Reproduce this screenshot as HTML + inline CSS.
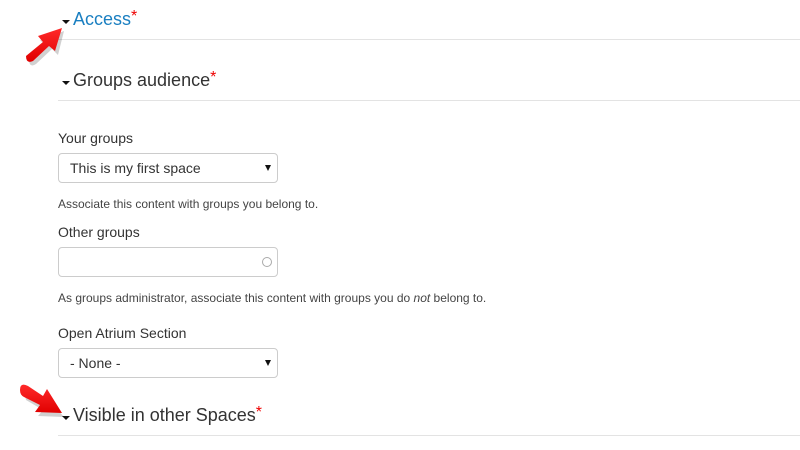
<!DOCTYPE html>
<html><head><meta charset="utf-8"><style>
body{margin:0;width:800px;height:450px;background:#fff;font-family:"Liberation Sans",Arial,sans-serif;color:#333;position:relative;overflow:hidden}
.a{position:absolute;white-space:nowrap}
.h{font-size:18px;line-height:20px}
.h .c{display:inline-block;width:0;height:0;border-left:4px solid transparent;border-right:4px solid transparent;border-top:4px solid #111;margin-right:3px;vertical-align:middle;position:relative;top:2px}
.st{color:#e00;font-size:16px;vertical-align:top;position:relative;top:-2px}
.ln{position:absolute;left:58px;right:0;height:1px;background:#e3e3e3}
.lb{font-size:14px}
.sel{position:absolute;left:58px;width:218px;height:28px;border:1px solid #ccc;border-radius:4px;font-size:14px;line-height:28px;box-sizing:content-box}
.sel span{position:absolute;left:11px}
.sel i{position:absolute;right:6px;top:11px;width:0;height:0;border-left:3px solid transparent;border-right:3px solid transparent;border-top:6px solid #111}
.d{font-size:12px;color:#444}
</style></head><body>
<div class="a h" style="left:62px;top:9px;color:#1a7fc1"><span class="c"></span>Access<span class="st">*</span></div>
<div class="ln" style="top:39px"></div>
<div class="a h" style="left:62px;top:70px"><span class="c"></span>Groups audience<span class="st">*</span></div>
<div class="ln" style="top:100px"></div>
<div class="a lb" style="left:58px;top:130px">Your groups</div>
<div class="sel" style="top:153px"><span>This is my first space</span><i></i></div>
<div class="a d" style="left:58px;top:197px">Associate this content with groups you belong to.</div>
<div class="a lb" style="left:58px;top:224px">Other groups</div>
<div class="sel" style="top:247px"><b style="position:absolute;right:5px;top:9px;width:8px;height:8px;border:1px solid #aaa;border-radius:50%"></b></div>
<div class="a d" style="left:58px;top:291px">As groups administrator, associate this content with groups you do <i>not</i> belong to.</div>
<div class="a lb" style="left:58px;top:325px">Open Atrium Section</div>
<div class="sel" style="top:348px"><span>- None -</span><i></i></div>
<div class="a h" style="left:62px;top:405px"><span class="c"></span>Visible in other Spaces<span class="st">*</span></div>
<div class="ln" style="top:435px"></div>
<svg class="a" style="left:0;top:0" width="80" height="450" viewBox="0 0 80 450">
<defs><linearGradient id="g" x1="0" y1="0" x2="0" y2="1"><stop offset="0" stop-color="#ff2a2a"/><stop offset="1" stop-color="#e00000"/></linearGradient></defs>
<g fill="#000" opacity="0.18"><path d="M29 61 L46 46 L40 40 L64 31 L58 55 L52 49 L36 64 Q30 68 29 61Z"/>
<path d="M24 392 L42 404 L46 396 L64 417 L38 416 L43 410 L26 400Z"/></g>
<g fill="url(#g)">
<path d="M26 56 L43 42 L38 36 L62 28 L55 51 L49 46 L33 61 Q26 64 26 56Z"/>
<path d="M20 390 Q20 382 28 386 L43 396 L47 389 L62 413 L35 412 L40 405 L24 397 Q20 395 20 390Z"/>
</g>
</svg>
</body></html>
